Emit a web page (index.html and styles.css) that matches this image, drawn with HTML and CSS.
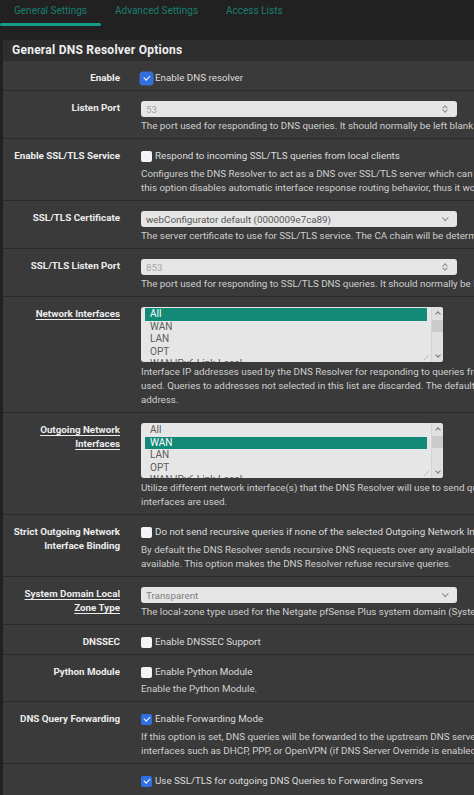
FILE: index.html
```html
<!DOCTYPE html>
<html lang="en">
<head>
<meta charset="utf-8">
<title>DNS Resolver: General Settings</title>
<link rel="stylesheet" href="styles.css">
</head>
<body>
<nav class="tabs">
  <a class="tab active">General Settings</a>
  <a class="tab">Advanced Settings</a>
  <a class="tab">Access Lists</a>
</nav>
<section class="panel">
  <h2 class="panel-heading">General DNS Resolver Options</h2>
  <div class="panel-body">

    <div class="row">
      <div class="label">Enable</div>
      <div class="control">
        <label class="check"><span class="box checked focus"></span>Enable DNS resolver</label>
      </div>
    </div>

    <div class="row">
      <div class="label">Listen Port</div>
      <div class="control">
        <div class="input number"><span class="ph">53</span><span class="spin"></span></div>
        <p class="help">The port used for responding to DNS queries. It should normally be left blank unless another service needs to bind to TCP/UDP port 53.</p>
      </div>
    </div>

    <div class="row">
      <div class="label">Enable SSL/TLS Service</div>
      <div class="control">
        <label class="check"><span class="box"></span>Respond to incoming SSL/TLS queries from local clients</label>
        <p class="help gap">Configures the DNS Resolver to act as a DNS over SSL/TLS server which can answer queries from clients which also support DNS over TLS. Activating<br>this option disables automatic interface response routing behavior, thus it works best with specific interface bindings.</p>
      </div>
    </div>

    <div class="row">
      <div class="label">SSL/TLS Certificate</div>
      <div class="control">
        <div class="input select"><span class="val">webConfigurator default (0000009e7ca89)</span><span class="chev"></span></div>
        <p class="help">The server certificate to use for SSL/TLS service. The CA chain will be determined automatically.</p>
      </div>
    </div>

    <div class="row">
      <div class="label">SSL/TLS Listen Port</div>
      <div class="control">
        <div class="input number"><span class="ph">853</span><span class="spin"></span></div>
        <p class="help">The port used for responding to SSL/TLS DNS queries. It should normally be left blank unless another service needs to bind to TCP/UDP port 853.</p>
      </div>
    </div>

    <div class="row">
      <div class="label"><span class="ul">Network Interfaces</span></div>
      <div class="control">
        <div class="listbox">
          <ul class="items">
            <li class="sel">All</li>
            <li>WAN</li>
            <li>LAN</li>
            <li>OPT</li>
            <li>WAN IPv6 Link-Local</li>
          </ul>
          <div class="sbar"><span class="up"></span><span class="thumb"></span><span class="down"></span></div>
          <span class="grip"></span>
        </div>
        <p class="help gap2">Interface IP addresses used by the DNS Resolver for responding to queries from clients. If an interface has both IPv4 and IPv6 IPs, both are<br>used. Queries to addresses not selected in this list are discarded. The default behavior is to respond to queries on every available IPv4 and IPv6<br>address.</p>
      </div>
    </div>

    <div class="row">
      <div class="label"><span class="ul">Outgoing Network</span><br><span class="ul">Interfaces</span></div>
      <div class="control">
        <div class="listbox">
          <ul class="items">
            <li>All</li>
            <li class="sel">WAN</li>
            <li>LAN</li>
            <li>OPT</li>
            <li>WAN IPv6 Link-Local</li>
          </ul>
          <div class="sbar"><span class="up"></span><span class="thumb"></span><span class="down"></span></div>
          <span class="grip"></span>
        </div>
        <p class="help gap2">Utilize different network interface(s) that the DNS Resolver will use to send queries to authoritative servers and receive their replies. By default all<br>interfaces are used.</p>
      </div>
    </div>

    <div class="row">
      <div class="label">Strict Outgoing Network Interface Binding</div>
      <div class="control">
        <label class="check"><span class="box"></span>Do not send recursive queries if none of the selected Outgoing Network Interfaces are available.</label>
        <p class="help gap">By default the DNS Resolver sends recursive DNS requests over any available interfaces if none of the selected Outgoing Network Interfaces are<br>available. This option makes the DNS Resolver refuse recursive queries.</p>
      </div>
    </div>

    <div class="row">
      <div class="label"><span class="ul">System Domain Local</span><br><span class="ul">Zone Type</span></div>
      <div class="control">
        <div class="input select"><span class="val muted">Transparent</span><span class="chev"></span></div>
        <p class="help">The local-zone type used for the Netgate pfSense Plus system domain (System | General Setup | Domain). Transparent is the default.</p>
      </div>
    </div>

    <div class="row">
      <div class="label">DNSSEC</div>
      <div class="control">
        <label class="check"><span class="box"></span>Enable DNSSEC Support</label>
      </div>
    </div>

    <div class="row">
      <div class="label">Python Module</div>
      <div class="control">
        <label class="check"><span class="box"></span>Enable Python Module</label>
        <p class="help tight">Enable the Python Module.</p>
      </div>
    </div>

    <div class="row">
      <div class="label">DNS Query Forwarding</div>
      <div class="control">
        <label class="check"><span class="box checked"></span>Enable Forwarding Mode</label>
        <p class="help gap">If this option is set, DNS queries will be forwarded to the upstream DNS servers defined under System &gt; General Setup or those obtained via dynamic<br>interfaces such as DHCP, PPP, or OpenVPN (if DNS Server Override is enabled there).</p>
      </div>
    </div>

    <div class="row">
      <div class="label"></div>
      <div class="control">
        <label class="check"><span class="box checked"></span>Use SSL/TLS for outgoing DNS Queries to Forwarding Servers</label>
        <p class="help gap">When set in conjunction with DNS Query Forwarding, queries to all upstream forwarding DNS servers will be sent using SSL/TLS on the default port of 853.</p>
      </div>
    </div>

  </div>
</section>
</body>
</html>
```

FILE: styles.css
```css
html, body {
  margin: 0;
  padding: 0;
  background: #212121;
  overflow: hidden;
  width: 474px;
  height: 795px;
}
body {
  font-family: Roboto, "Liberation Sans", sans-serif;
  font-size: 9.8px;
  color: #d2d2d2;
}
.tabs {
  display: flex;
  height: 40px;
  width: 900px;
}
.tab {
  position: relative;
  padding: 4px 14px 0;
  line-height: 13px;
  color: #1b7e70;
  font-size: 10px;
}
.tab.active::after {
  content: "";
  position: absolute;
  left: 0;
  right: 0;
  top: 23px;
  height: 3px;
  border-radius: 2px;
  background: #159b89;
}
.panel {
  margin-left: 3px;
  width: 900px;
  background: #3a3a3a;
}
.panel-heading {
  margin: 0;
  height: 21px;
  line-height: 21px;
  padding-left: 9px;
  background: #2e2e2e;
  color: #efefef;
  font-size: 12px;
  font-weight: 700;
  letter-spacing: 0.25px;
}
.row {
  display: grid;
  grid-template-columns: 117px 1fr;
  column-gap: 21px;
  padding: 10px 0 5px;
  border-bottom: 1px solid #2a2a2a;
}
.label {
  text-align: right;
  font-weight: 700;
  color: #ececec;
  line-height: 14px;
  font-size: 9.8px;
}
.ul {
  text-decoration: underline;
  text-underline-offset: 2px;
  text-decoration-thickness: 1px;
}
.control {
  min-width: 0;
}
.check {
  display: flex;
  align-items: center;
  height: 14px;
  line-height: 14px;
  color: #dcdcdc;
  white-space: nowrap;
}
.box {
  width: 11px;
  height: 11px;
  border-radius: 2px;
  background: #f4f4f4;
  margin-right: 3px;
  flex: none;
  position: relative;
  box-sizing: border-box;
}
.box.checked {
  background: #2f6fe4;
}
.box.checked::after {
  content: "";
  position: absolute;
  left: 3.5px;
  top: 1.5px;
  width: 2.5px;
  height: 5px;
  border: solid #fff;
  border-width: 0 1.6px 1.6px 0;
  transform: rotate(45deg);
}
.box.focus {
  box-shadow: 0 0 0 1.5px #3d6fcf;
}
.help {
  margin: 2px 0 0;
  line-height: 14px;
  white-space: nowrap;
  color: #cfcfcf;
}
.help.gap { margin-top: 4px; }
.help.gap2 { margin-top: 3px; }
.help.tight { margin-top: 3px; }
.input {
  width: 316px;
  height: 16px;
  box-sizing: border-box;
  background: #e6e6e6;
  border-radius: 3px;
  display: flex;
  align-items: center;
  justify-content: space-between;
  padding: 0 9px 0 5px;
}
.ph {
  color: #a5a5a5;
}
.val {
  color: #555;
}
.val.muted {
  color: #808080;
}
.spin {
  width: 6px;
  height: 10px;
  position: relative;
}
.spin::before,
.spin::after {
  content: "";
  position: absolute;
  left: 1px;
  width: 3px;
  height: 3px;
  border: solid #8a8a8a;
  border-width: 1px 0 0 1px;
}
.spin::before { top: 2px; transform: rotate(45deg); }
.spin::after { top: 4px; transform: rotate(225deg); }
.chev {
  width: 3.5px;
  height: 3.5px;
  border: solid #808080;
  border-width: 0 1.2px 1.2px 0;
  transform: rotate(45deg);
  margin-top: -3px;
  margin-right: 1px;
}
.listbox {
  position: relative;
  width: 302px;
  height: 55px;
  box-sizing: border-box;
  background: #e6e6e6;
  border-radius: 3px;
  overflow: hidden;
  display: flex;
}
.items {
  list-style: none;
  margin: 0;
  padding: 1px 4px 0;
  flex: 1;
  height: 54px;
  overflow: hidden;
}
.items li {
  height: 12.5px;
  line-height: 12.5px;
  padding-left: 5px;
  color: #5a5a5a;
  font-size: 10px;
}
.items li.sel {
  background: #138a78;
  color: #fff;
}
.sbar {
  width: 11px;
  display: flex;
  flex-direction: column;
  align-items: center;
  background: #e0e0e0;
  border-left: 1px solid #d4d4d4;
}
.sbar .up,
.sbar .down {
  width: 3px;
  height: 3px;
  border: solid #777;
  border-width: 1px 0 0 1px;
  margin: 4px 0;
}
.sbar .up { transform: rotate(45deg); margin-top: 5px; }
.sbar .down { transform: rotate(225deg); margin-top: auto; margin-bottom: 5px; }
.sbar .thumb {
  width: 11px;
  height: 12px;
  background: #cbcbcb;
}
.grip {
  position: absolute;
  right: 14px;
  bottom: 2px;
  width: 5px;
  height: 5px;
  background: linear-gradient(135deg, transparent 45%, #bdbdbd 45%, #bdbdbd 55%, transparent 55%);
}
```
